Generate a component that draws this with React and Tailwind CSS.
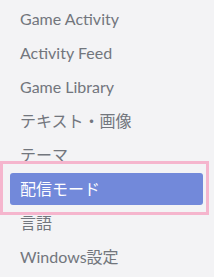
const ITEMS = ['Game Activity', 'Activity Feed', 'Game Library', 'テキスト・画像', 'テーマ', '配信モード', '言語', 'Windows設定']

export default function App() {
  return (
    <div className="w-[214px] h-[277px] bg-[#f3f3f5] overflow-hidden" style={{ fontFamily: 'Lato, "Noto Sans CJK JP", sans-serif' }}>
      <div className="flex flex-col gap-[2px] pt-[3px] pl-[10px] w-[203px]">
        {ITEMS.map(label => {
          const selected = label === '配信モード'
          return (
            <div key={label} className="relative">
              <div className={`h-[32px] flex items-center px-[10px] rounded-[3px] text-[16px] leading-none ${selected ? 'bg-[#7289da] text-white' : 'text-[#72767d]'}`}>
                {label}
              </div>
              {selected && (
                <div className="absolute -left-[10px] -top-[12px] w-[209px] h-[54px] border-[3px] border-[#f5b5cd] pointer-events-none" />
              )}
            </div>
          )
        })}
      </div>
    </div>
  )
}
